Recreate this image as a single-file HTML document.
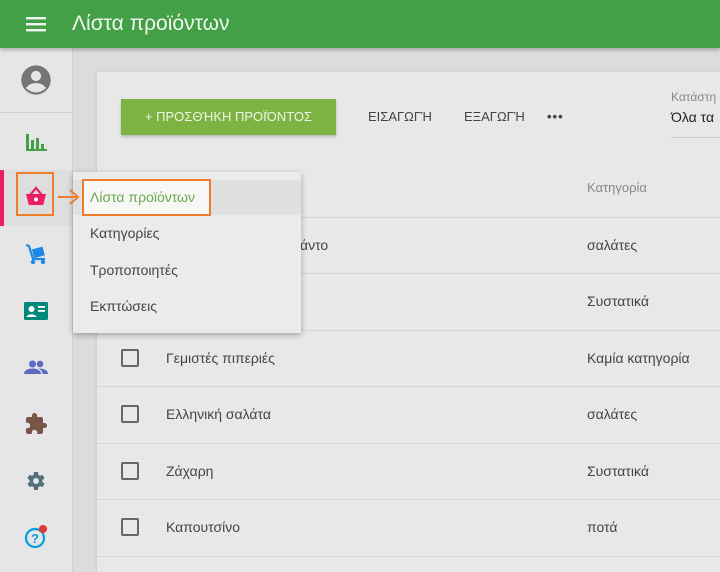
<!DOCTYPE html>
<html><head><meta charset="utf-8"><style>
*{box-sizing:border-box;margin:0;padding:0}
html,body{width:720px;height:572px;overflow:hidden}
body{background:#dcdcdc;font-family:"Liberation Sans","DejaVu Sans",sans-serif;position:relative;color:#333}
.hdr{position:absolute;left:0;top:0;width:720px;height:48px;background:#43a047;box-shadow:0 2px 4px rgba(0,0,0,.25);z-index:5}
.hdr .t{position:absolute;left:72px;top:12px;font-size:21px;color:#f0f5ee}
.side{position:absolute;left:0;top:48px;width:73px;height:524px;background:#e6e6e6;border-right:1px solid #d0d0d0}
.ic{position:absolute;left:24px;width:24px;height:24px}
.card{position:absolute;left:97px;top:72px;width:623px;height:500px;background:#e8e8e8;box-shadow:0 1px 3px rgba(0,0,0,.15)}
.btn{position:absolute;left:121px;top:99px;width:215px;height:36px;background:#7cb342;color:#eef5e6;font-size:13px;line-height:36px;text-align:center;box-shadow:0 2px 3px rgba(0,0,0,.2)}
.tb{position:absolute;top:109px;font-size:13px;color:#444}
.row{position:absolute;left:97px;width:623px;border-top:1px solid #d4d4d4}
.cb{position:absolute;left:121px;width:18px;height:18px;border:2px solid #666;border-radius:2px}
.txt{position:absolute;font-size:14px;color:#444}
.menu{position:absolute;left:73px;top:172px;width:228px;height:161px;background:#ebebeb;box-shadow:0 2px 6px rgba(0,0,0,.3);z-index:6}
.menu div{position:absolute;left:17px;font-size:14px;color:#444}
</style></head><body>
<div class="hdr">
<svg style="position:absolute;left:26px;top:15px" width="20" height="18"><rect y="2" width="20" height="2.4" fill="#f0f5ee"/><rect y="8" width="20" height="2.4" fill="#f0f5ee"/><rect y="14" width="20" height="2.4" fill="#f0f5ee"/></svg>
<div class="t">Λίστα προϊόντων</div></div>
<div class="side">
<div style="position:absolute;left:0;top:64px;width:72px;border-top:1px solid #d0d0d0"></div>
<div style="position:absolute;left:0;top:122px;width:72px;height:56px;background:#dedede"></div>
<div style="position:absolute;left:0;top:122px;width:4px;height:56px;background:#e91e63"></div>
</div>
<svg style="position:absolute;left:20px;top:64px" width="32" height="32" viewBox="0 0 24 24"><circle cx="12" cy="12" r="11" fill="#757575"/><circle cx="12" cy="9" r="3.8" fill="#e6e6e6"/><path d="M4.5 18c2-3 5-3.7 7.5-3.7s5.5.7 7.5 3.7c-2 2.2-4.7 3.3-7.5 3.3s-5.5-1.1-7.5-3.3z" fill="#e6e6e6"/></svg>
<svg class="ic" style="top:130px" viewBox="0 0 24 24"><path d="M2 4h3v16H2zM7 10h3v10H7zM12 8h3v12h-3zM17 14h3v6h-3zM2 19h21v2H2z" fill="#43a047"/></svg>
<svg class="ic" style="top:185px" viewBox="0 0 24 24"><path d="M2 9h20l-2.8 11H4.8z" fill="#e91e63"/><path d="M6.5 9.5l5.5-6.5 5.5 6.5" stroke="#e91e63" stroke-width="2.2" fill="none"/><circle cx="12" cy="14.5" r="2" fill="#fff"/></svg>
<svg class="ic" style="top:242px" viewBox="0 0 24 24"><path d="M2 3l3 1 4 13h12" stroke="#1e88e5" stroke-width="2.2" fill="none"/><rect x="9" y="6" width="11" height="9" fill="#1e88e5" transform="rotate(-15 14 11)"/><circle cx="9" cy="20" r="2.2" fill="#1e88e5"/><circle cx="19" cy="20" r="2.2" fill="#1e88e5"/></svg>
<svg class="ic" style="top:299px" viewBox="0 0 24 24"><rect x="0" y="3" width="24" height="18" rx="1.5" fill="#00897b"/><circle cx="7.5" cy="10" r="3" fill="#fff"/><path d="M2.5 18c1-3.5 9-3.5 10 0z" fill="#fff"/><rect x="14" y="7" width="7" height="1.8" fill="#fff"/><rect x="14" y="11" width="7" height="1.8" fill="#fff"/></svg>
<svg class="ic" style="top:355px" viewBox="0 0 24 24"><circle cx="8.5" cy="9" r="3.5" fill="#5c6bc0"/><circle cx="16" cy="9" r="3.3" fill="#5c6bc0"/><path d="M0 19c0-4 4.5-5.5 8.5-5.5S17 15 17 19zM14 13.5c3.5 0 10 .5 10 5.5h-5.5c0-2.5-1.5-4.5-4.5-5.5z" fill="#5c6bc0"/></svg>
<svg class="ic" style="top:412px" viewBox="0 0 24 24"><path d="M20.5 11H19V7c0-1.1-.9-2-2-2h-4V3.5a2.5 2.5 0 0 0-5 0V5H4c-1.1 0-2 .9-2 2v3.8h1.5a2.7 2.7 0 0 1 0 5.4H2V20c0 1.1.9 2 2 2h3.8v-1.5a2.7 2.7 0 0 1 5.4 0V22H17c1.1 0 2-.9 2-2v-4h1.5a2.5 2.5 0 0 0 0-5z" fill="#795548"/></svg>
<svg class="ic" style="top:469px" viewBox="0 0 24 24"><path d="M19.4 13a7.5 7.5 0 0 0 0-2l2.1-1.6-2-3.5-2.5 1a7 7 0 0 0-1.7-1L15 3h-4l-.4 2.9a7 7 0 0 0-1.7 1l-2.5-1-2 3.5L6.6 11a7.5 7.5 0 0 0 0 2l-2.1 1.6 2 3.5 2.5-1a7 7 0 0 0 1.7 1L11 21h4l.4-2.9a7 7 0 0 0 1.7-1l2.5 1 2-3.5z" fill="#546e7a" transform="translate(-1 0)"/><circle cx="12" cy="12" r="3" fill="#e6e6e6"/></svg>
<svg class="ic" style="top:525px" viewBox="0 0 24 24"><circle cx="11" cy="13" r="9" stroke="#039be5" stroke-width="2.2" fill="none"/><text x="11" y="18" font-size="13" font-weight="bold" text-anchor="middle" fill="#039be5" font-family="Liberation Sans">?</text><circle cx="19" cy="4" r="4" fill="#e53935"/></svg>
<div class="card"></div>
<div class="btn">+ ΠΡΟΣΘΉΚΗ ΠΡΟΪΌΝΤΟΣ</div>
<div class="tb" style="left:368px">ΕΙΣΑΓΩΓΉ</div>
<div class="tb" style="left:464px">ΕΞΑΓΩΓΉ</div>
<div class="tb" style="left:547px;top:109px;font-weight:bold;letter-spacing:1px">•••</div>
<div style="position:absolute;left:671px;top:90px;font-size:12px;color:#888">Κατάστη</div>
<div style="position:absolute;left:671px;top:109px;font-size:14px;color:#222">Όλα τα</div>
<div style="position:absolute;left:671px;top:137px;width:60px;border-top:1px solid #ccc"></div>
<div class="txt" style="left:587px;top:180px;font-size:13px;color:#888">Κατηγορία</div>
<div class="row" style="top:217px"></div><div class="row" style="top:273px"></div><div class="row" style="top:330px"></div><div class="row" style="top:386px"></div><div class="row" style="top:443px"></div><div class="row" style="top:499px"></div><div class="row" style="top:556px"></div>
<div class="txt" style="left:300px;top:237px">άντο</div>
<div class="txt" style="left:587px;top:237px">σαλάτες</div>
<div class="txt" style="left:587px;top:293px">Συστατικά</div>
<div class="cb" style="top:349px"></div><div class="txt" style="left:166px;top:350px">Γεμιστές πιπεριές</div><div class="txt" style="left:587px;top:350px">Καμία κατηγορία</div>
<div class="cb" style="top:405px"></div><div class="txt" style="left:166px;top:406px">Ελληνική σαλάτα</div><div class="txt" style="left:587px;top:406px">σαλάτες</div>
<div class="cb" style="top:462px"></div><div class="txt" style="left:166px;top:463px">Ζάχαρη</div><div class="txt" style="left:587px;top:463px">Συστατικά</div>
<div class="cb" style="top:518px"></div><div class="txt" style="left:166px;top:519px">Καπουτσίνο</div><div class="txt" style="left:587px;top:519px">ποτά</div>
<div class="menu">
<div style="left:0;top:8px;width:228px;height:35px;background:#e0e0e0"></div>
<div style="left:9px;top:7px;width:129px;height:37px;border:2px solid #ef7d2d;background:#f7f7f5"></div>
<div style="top:17px;color:#6aa84f">Λίστα προϊόντων</div>
<div style="top:53px">Κατηγορίες</div>
<div style="top:90px">Τροποποιητές</div>
<div style="top:126px">Εκπτώσεις</div>
</div>
<div style="position:absolute;left:16px;top:172px;width:38px;height:44px;border:2px solid #ef7d2d;z-index:6"></div>
<svg style="position:absolute;left:57px;top:188px;z-index:6" width="24" height="18"><path d="M1 9h20M13 2l8 7-8 7" stroke="#ef7d2d" stroke-width="2" fill="none"/></svg>
</body></html>
